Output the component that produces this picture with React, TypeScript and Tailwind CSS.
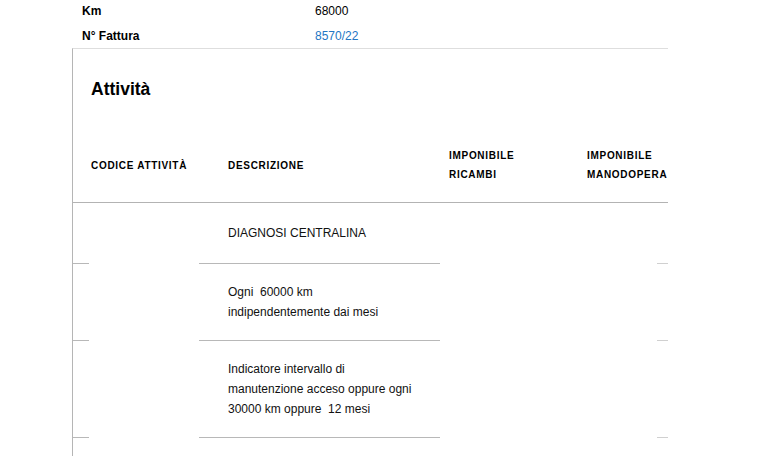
const rows = [
  { code: '', desc: ['DIAGNOSI CENTRALINA'] },
  { code: '', desc: ['Ogni  60000 km', 'indipendentemente dai mesi'] },
  {
    code: '',
    desc: ['Indicatore intervallo di', 'manutenzione acceso oppure ogni', '30000 km oppure  12 mesi'],
  },
]

const cols = 'grid grid-cols-[126px_241px_138px_1fr]'

export default function App() {
  return (
    <div className="w-[762px] h-[456px] overflow-hidden bg-white text-black pl-[72px] font-['Liberation_Sans',Arial,sans-serif]">
      <div className="flex flex-col gap-[3px] pl-[10px] text-[12px] leading-[22px]">
        <div className="flex">
          <span className="w-[233px] font-bold">Km</span>
          <span>68000</span>
        </div>
        <div className="flex">
          <span className="w-[233px] font-bold">N° Fattura</span>
          <span className="text-[#2376c4]">8570/22</span>
        </div>
      </div>

      <div className="mt-[1px] w-[596px] h-[420px] overflow-hidden border-l border-t border-l-[#b5b5b5] border-t-[#dedede]">
        <h2 className="pl-[18px] pt-[29px] text-[17.5px] leading-[22px] font-bold">Attività</h2>

        <div className={`${cols} items-center pt-[46px] pb-[18px] border-b border-[#b3b3b3] text-[10px] leading-[19px] font-bold tracking-[0.07em] uppercase whitespace-nowrap`}>
          <div className="pl-[18px]">Codice attività</div>
          <div className="pl-[29px]">Descrizione</div>
          <div className="pl-[9px]">
            Imponibile
            <br />
            Ricambi
          </div>
          <div className="pl-[9px]">
            Imponibile
            <br />
            Manodopera
          </div>
        </div>

        {rows.map((r, i) => (
          <div key={i}>
            <div className={`${cols} items-center min-h-[60px] py-[18px] text-[12px] leading-5 text-[#111]`}>
              <div className="pl-[18px]">{r.code}</div>
              <div className="pl-[29px]">
                {r.desc.map((d) => (
                  <div key={d} className="whitespace-pre">{d}</div>
                ))}
              </div>
              <div />
              <div />
            </div>
            <div className={`${cols} h-px`}>
              <div className="w-4 bg-[#b8b8b8]" />
              <div className="bg-[#b8b8b8]" />
              <div />
              <div className="flex justify-end">
                <div className="w-[11px] bg-[#d0d0d0]" />
              </div>
            </div>
          </div>
        ))}
      </div>
    </div>
  )
}
